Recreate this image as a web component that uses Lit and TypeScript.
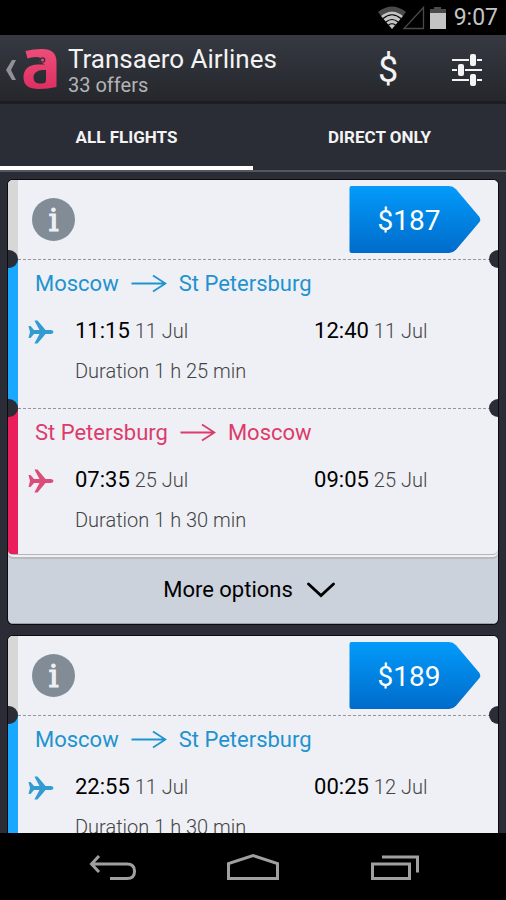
import { LitElement, html, css, svg, nothing } from "lit";
import { customElement, property, state } from "lit/decorators.js";
import { classMap } from "lit/directives/class-map.js";

interface Leg {
  from: string;
  to: string;
  departTime: string;
  departDate: string;
  arriveTime: string;
  arriveDate: string;
  duration: string;
  inbound: boolean;
}

interface Offer {
  price: string;
  legs: Leg[];
  more: boolean;
}

const OFFERS: Offer[] = [
  {
    price: "$187",
    more: true,
    legs: [
      {
        from: "Moscow", to: "St Petersburg",
        departTime: "11:15", departDate: "11 Jul",
        arriveTime: "12:40", arriveDate: "11 Jul",
        duration: "1 h 25 min", inbound: false,
      },
      {
        from: "St Petersburg", to: "Moscow",
        departTime: "07:35", departDate: "25 Jul",
        arriveTime: "09:05", arriveDate: "25 Jul",
        duration: "1 h 30 min", inbound: true,
      },
    ],
  },
  {
    price: "$189",
    more: false,
    legs: [
      {
        from: "Moscow", to: "St Petersburg",
        departTime: "22:55", departDate: "11 Jul",
        arriveTime: "00:25", arriveDate: "12 Jul",
        duration: "1 h 30 min", inbound: false,
      },
    ],
  },
];

const resets = css`
  * { box-sizing: border-box; }
  button {
    margin: 0;
    padding: 0;
    border: 0;
    background: none;
    color: inherit;
    font: inherit;
    cursor: pointer;
  }
  svg { display: block; flex: none; }
`;

@customElement("status-bar")
class StatusBar extends LitElement {
  static styles = [resets, css`
    :host {
      display: flex;
      flex: none;
      align-items: center;
      justify-content: flex-end;
      height: 35px;
      padding-right: 8px;
      background: #000;
      color: #c4c4c4;
      font-size: 23px;
      line-height: 36px;
    }
    .clock { margin-left: 8px; }
  `];

  render() {
    return html`
      <svg width="68" height="26" viewBox="0 0 68 26" aria-hidden="true">
        <path d="M0 7Q14-4 28 7L25 11Q14 2 3 11Z" fill="#4a4a4a" />
        <path d="M3 11Q14 2 25 11L14 24Z" fill="#c4c4c4" />
        <path d="M5 13.500Q14 6 23 13.500M8 17Q14 12 20 17M10.500 20Q14 17.500 17.500 20" fill="none" stroke="#000" stroke-width="1.200" />
        <path d="M26 23.500H45.500V2.500Z" fill="none" stroke="#4a4a4a" stroke-width="1.300" />
        <path d="M56 2h7v2h5v4H52V4h4Z" fill="#4a4a4a" />
        <path d="M52 8h16v16H52Z" fill="#c4c4c4" />
      </svg>
      <span class="clock">9:07</span>
    `;
  }
}

@customElement("flight-leg")
class FlightLeg extends LitElement {
  @property({ attribute: false }) leg!: Leg;

  static styles = [resets, css`
    :host { display: block; }
    .leg {
      position: relative;
      border-left: 10px solid #18a8ff;
      padding: 11px 0 23px;
      color: #1e93cf;
    }
    .inbound {
      border-left-color: #e91e5b;
      border-bottom-left-radius: 4px;
      padding-bottom: 20px;
      color: #dc3b6b;
    }
    .leg::before {
      content: "";
      display: block;
      height: 1px;
      margin: -11px 8px 10px 0;
      background: repeating-linear-gradient(90deg, #94969b 0 3px, transparent 3px 5px);
    }
    .notch {
      position: absolute;
      top: -9px;
      width: 18px;
      height: 18px;
      border-radius: 50%;
      background: #2a2d35;
    }
    .left { left: -18px; }
    .right { right: -9px; }
    .route {
      display: flex;
      align-items: center;
      gap: 12px;
      padding-left: 17px;
      font-size: 22px;
      line-height: 28px;
    }
    .times {
      display: grid;
      grid-template-columns: 57px 13fr 10fr;
      align-items: center;
      padding-top: 17px;
      line-height: 32px;
    }
    .plane { margin-left: 10px; opacity: 0.9; }
    .time { margin-right: 1px; color: #000; font-size: 22px; }
    .date, .duration { color: #444; font-size: 20px; font-weight: 300; }
    .duration {
      margin: 0;
      padding: 8px 0 0 57px;
      line-height: 28px;
    }
  `];

  render() {
    const l = this.leg;
    return html`
      <section class=${classMap({ leg: true, inbound: l.inbound })}>
        <span class="notch left"></span>
        <span class="notch right"></span>
        <div class="route">
          <span>${l.from}</span>
          <svg width="36" height="18" viewBox="0 0 36 18" fill="none" stroke="currentColor" stroke-width="1.800" aria-hidden="true">
            <path d="M0.500 8.500H34M22 0.500L34.500 8.500L22 16.500" />
          </svg>
          <span>${l.to}</span>
        </div>
        <div class="times">
          <svg class="plane" width="26" height="24" viewBox="0 0 26 24" fill="currentColor" aria-hidden="true">
            <path d="M0.500 6H2.500L6 10H11.500L6.500 0.800Q6.300 0.400 7 0.400H9.500L17.500 10H23Q25.500 10.300 25.500 12Q25.500 13.700 23 14H17.500L9.500 23.600H7Q6.300 23.600 6.500 23.200L11.500 14H6L2.500 18H0.500L2 12Z" />
          </svg>
          <span><span class="time">${l.departTime}</span> <span class="date">${l.departDate}</span></span>
          <span><span class="time">${l.arriveTime}</span> <span class="date">${l.arriveDate}</span></span>
        </div>
        <p class="duration">Duration ${l.duration}</p>
      </section>
    `;
  }
}

@customElement("offer-card")
class OfferCard extends LitElement {
  @property({ attribute: false }) offer!: Offer;

  static styles = [resets, css`
    :host { display: block; }
    .card {
      overflow: hidden;
      border-radius: 5px;
      background: #cbd2dc;
      box-shadow: 0 0 0 1px #0b0c10;
    }
    .ticket {
      background: #eff0f5;
    }
    .stacked {
      border-radius: 0 0 5px 5px;
      box-shadow: 0 1px 0 #b4b5b9, 0 3px 0 #eff0f5, 0 5px 0 #b9b9be;
      margin-bottom: 5px;
    }
    .head {
      display: flex;
      align-items: flex-start;
      justify-content: space-between;
      height: 79px;
      border-left: 10px solid #d7d7d7;
      padding: 6px 17px 0 14px;
    }
    .info {
      width: 43px;
      height: 43px;
      margin-top: 12px;
      border-radius: 50%;
      background: #818c96;
      color: #eff0f5;
      font: 32px/42px "DejaVu Serif", serif;
      -webkit-text-stroke: 1px #eff0f5;
    }
    .price {
      display: grid;
      width: 132px;
      height: 67px;
      align-items: center;
      color: #fff;
      font-size: 28px;
    }
    .price > * { grid-area: 1 / 1; }
    .amount { padding: 2px 12px 0 0; }
    .more {
      display: flex;
      align-items: center;
      justify-content: center;
      gap: 14px;
      width: 100%;
      height: 65px;
      padding: 0 8px 3px 0;
      color: #000;
      font-size: 22px;
      border-bottom: 1px solid #98a0ab;
    }
  `];

  render() {
    const o = this.offer;
    return html`
      <article class="card">
        <div class=${classMap({ ticket: true, stacked: o.more })}>
          <div class="head">
            <button class="info" aria-label="Offer details">i</button>
            <button class="price">
              <svg width="132" height="67" viewBox="0 0 132 67" aria-hidden="true">
                <defs>
                  <linearGradient id="tag" x1="0" y1="0" x2="0" y2="1">
                    <stop offset="0" stop-color="#039bfb" />
                    <stop offset="1" stop-color="#006bca" />
                  </linearGradient>
                </defs>
                <path fill="url(#tag)" d="M2.500 0H100Q104 0 107 3.200L130.500 31Q132 33.500 130.500 36L107 63.800Q104 67 100 67H2.500Q0.500 67 0.500 65V2Q0.500 0 2.500 0Z" />
              </svg>
              <span class="amount">${o.price}</span>
            </button>
          </div>
          ${o.legs.map((leg) => html`<flight-leg .leg=${leg}></flight-leg>`)}
        </div>
        ${o.more
          ? html`
              <button class="more">
                More options
                <svg width="28" height="16" viewBox="0 0 28 16" fill="none" stroke="#000" stroke-width="2.800" stroke-linecap="round" aria-hidden="true">
                  <path d="M1.500 2L14 13.500L26.500 2" />
                </svg>
              </button>
            `
          : nothing}
      </article>
    `;
  }
}

const navIcons = [
  {
    label: "Back",
    art: svg`<path d="M6 11H42Q49.500 11 49.500 18V18.500Q49.500 25.500 42 25.500H25M14 3L6.500 11L14 19" />`,
  },
  {
    label: "Home",
    art: svg`<path d="M2.500 25.500V10.500L27 2.500L51.500 10.500V25.500Z" />`,
  },
  {
    label: "Recent apps",
    art: svg`<path d="M5.500 11H42.500V25.500H5.500ZM15 4H50.500V19.500" />`,
  },
];

@customElement("app-root")
class AppRoot extends LitElement {
  @state() private tab = 0;

  static styles = [resets, css`
    :host {
      display: flex;
      flex-direction: column;
      height: 100vh;
      background: #2a2d35;
      color: #f3f3f3;
      font-family: Roboto, "Liberation Sans", sans-serif;
    }
    .bar {
      display: flex;
      flex: none;
      align-items: center;
      height: 69px;
      padding: 3px 22px 0 6px;
      background: linear-gradient(#363942, #25272c);
      border-bottom: 3px solid #1b1d22;
    }
    .up {
      display: flex;
      align-items: center;
      gap: 7px;
    }
    .titles {
      flex: 1;
      min-width: 0;
      padding: 3px 0 0 10px;
    }
    .title {
      margin: 0;
      font-size: 26px;
      font-weight: 400;
      line-height: 28px;
    }
    .count {
      margin: 0;
      color: #b4b4b5;
      font-size: 20px;
      line-height: 24px;
    }
    .currency {
      width: 40px;
      margin-right: 42px;
      font-size: 36px;
      line-height: 48px;
    }
    .tabs {
      display: flex;
      flex: none;
      height: 68px;
      border-bottom: 2px solid #55575c;
    }
    .tab {
      flex: 1;
      border-bottom: 4px solid transparent;
      border-top: 4px solid transparent;
      font-size: 17px;
      font-weight: 700;
    }
    .current { border-bottom-color: #fff; }
    .list {
      display: flex;
      flex: 1;
      flex-direction: column;
      gap: 12px;
      min-height: 0;
      overflow: hidden;
      padding: 8px 8px 0;
    }
    offer-card { flex: none; }
    .nav {
      display: flex;
      flex: none;
      height: 67px;
      padding: 0 42px;
      background: #000;
      color: #a0a0a0;
    }
    .key {
      display: flex;
      flex: 1;
      align-items: center;
      justify-content: center;
    }
  `];

  render() {
    return html`
      <status-bar></status-bar>
      <header class="bar">
        <button class="up" aria-label="Navigate up">
          <svg width="10" height="22" viewBox="0 0 10 22" aria-hidden="true">
            <path d="M6 1H10L5 11L10 21H6L0 11Z" fill="#8f9194" />
          </svg>
          <svg width="35" height="42" viewBox="0 0 35 42" aria-hidden="true">
            <defs>
              <linearGradient id="pink" x1="0" y1="0" x2="0" y2="1">
                <stop offset="0" stop-color="#ee4d79" />
                <stop offset="1" stop-color="#dd2f62" />
              </linearGradient>
            </defs>
            <path fill="url(#pink)" fill-rule="evenodd" d="M2.500 2Q10 0 19 0Q33.500 0 33.500 13V38Q25 40 16 40Q0.500 40 0.500 28.500Q0.500 16 15 15.500H22L16.500 12.500Q20 8 13 8Q8 8 4.500 9.500ZM23 21H19Q10.500 22 10.500 28.500Q10.500 34 16 34.500H20Q23 34 23 31Z" />
            <circle cx="19.500" cy="11" r="2.800" fill="#2d3037" />
            <circle cx="19.500" cy="11" r="1.500" fill="#ee4d79" />
          </svg>
        </button>
        <div class="titles">
          <h1 class="title">Transaero Airlines</h1>
          <p class="count">33 offers</p>
        </div>
        <button class="currency" aria-label="Currency">$</button>
        <button aria-label="Filters">
          <svg width="34" height="34" viewBox="0 0 34 34" fill="#f3f3f3" aria-hidden="true">
            <path d="M2 6h17v2H2zM27 6h5v2h-5zM2 16h5v2H2zM15 16h17v2H15zM2 26h17v2H2zM27 26h5v2h-5z" />
            <rect x="20" y="1" width="6" height="12" rx="2" />
            <rect x="8" y="11" width="6" height="12" rx="2" />
            <rect x="20" y="21" width="6" height="12" rx="2" />
          </svg>
        </button>
      </header>
      <div class="tabs" role="tablist">
        ${["ALL FLIGHTS", "DIRECT ONLY"].map(
          (name, i) => html`
            <button
              role="tab"
              aria-selected=${this.tab === i}
              class=${classMap({ tab: true, current: this.tab === i })}
              @click=${() => (this.tab = i)}
            >${name}</button>
          `,
        )}
      </div>
      <main class="list">
        ${OFFERS.map((offer) => html`<offer-card .offer=${offer}></offer-card>`)}
      </main>
      <nav class="nav">
        ${navIcons.map(
          (icon) => html`
            <button class="key" aria-label=${icon.label}>
              <svg width="54" height="28" viewBox="0 0 54 28" fill="none" stroke="currentColor" stroke-width="3" aria-hidden="true">
                ${icon.art}
              </svg>
            </button>
          `,
        )}
      </nav>
    `;
  }
}
